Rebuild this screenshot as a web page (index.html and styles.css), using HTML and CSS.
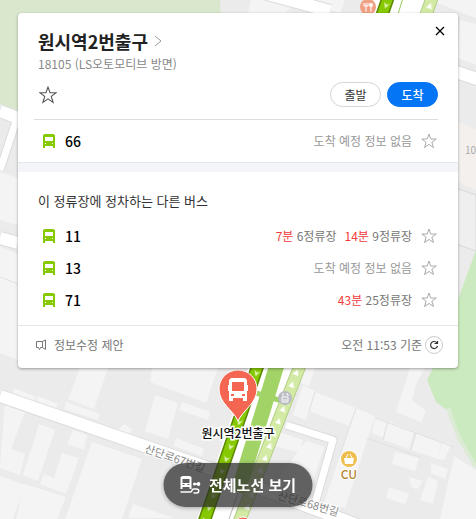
FILE: index.html
```html
<!DOCTYPE html>
<html lang="ko">

<head>
<meta charset="utf-8">
<meta name="viewport" content="width=device-width, initial-scale=1">

<title>원시역2번출구</title>

<link rel="stylesheet" href="styles.css">
</head>

<body>

	<!-- map -->
	<svg class="map" viewBox="0 0 476 519" preserveAspectRatio="xMidYMin slice" aria-hidden="true">
		<defs>
			<pattern id="down" width="13" height="13" patternUnits="userSpaceOnUse" patternTransform="translate(388 0) rotate(19.4)">
				<path d="M-3 3L0 5L3 3L0 9ZM10 3L13 5L16 3L13 9Z" fill="#e3f5bd"/>
			</pattern>
			<pattern id="up" width="13" height="13" patternUnits="userSpaceOnUse" patternTransform="translate(432 0) rotate(20)">
				<path d="M-3 9L0 3L3 9ZM10 9L13 3L16 9Z" fill="#fff"/>
			</pattern>
			<symbol id="star" viewBox="0 0 16 16">
				<path d="M8 1L9.800 6H15.200L10.900 9.200L12.500 14.600L8 11.400L3.500 14.600L5.100 9.200L.8 6H6.200Z" fill="none" stroke="currentColor"/>
			</symbol>
			<symbol id="bus" viewBox="0 0 12 14">
				<path fill-rule="evenodd" fill="currentColor" d="M2 0H10L12 1V14H10V12H2V14H0V1ZM2 3V7H10V3ZM2 9V10H3V9ZM9 9V10H10V9Z"/>
			</symbol>
		</defs>

		<rect width="476" height="519" fill="#ebebeb"/>

		<!-- blocks and buildings -->
		<g fill="#f4f4f4">
			<path d="M0 172L18 178V225L0 220ZM0 247L18 254V360L0 353Z"/>
			<path d="M251 0H300L285 13H248ZM308 0H345L340 13L310 4ZM460 20L476 24V65L458 58ZM430 0H476V18Z"/>
			<path d="M80 368H108L94 409L68 399ZM152 368H218L206 403L150 382Z"/>
			<path d="M155 395L178 403L168 439L145 431ZM182 402L210 412L208 420L179 410ZM176 438L204 449L202 456L174 446Z"/>
			<path d="M14 388L36 397L34 402L12 394ZM38 396L58 404L56 408L36 401ZM66 402L100 414L98 420L64 409ZM117 431L124 424L132 429L130 434Z"/>
			<path d="M5 401L26 409L11 449L25 454L20 475L0 468ZM39 424L55 430L38 481L23 475ZM73 430L87 435L84 450L67 444Z"/>
			<path d="M62 453L79 458L66 494L40 484L44 474L54 478ZM0 476L25 485L13 519H0ZM24 484L66 497L57 519H16ZM92 442L142 459L122 519H65ZM133 504L174 518H128Z"/>
			<path d="M303 385L315 391L306 420L293 415ZM315 392L356 408L349 426L309 411ZM356 408L375 416L345 508L324 503Z"/>
			<path d="M410 368H425L417 382L412 400L426 411L421 422L396 412ZM303 368H315L309 386L301 383Z"/>
			<path d="M375 418L387 421L383 438L372 433ZM388 421L414 432L409 449L384 440ZM416 433L441 442L438 459L411 450ZM442 442L451 445L444 460L438 459ZM395 452L419 458L415 471L392 464Z"/>
			<path d="M431 463L448 469L445 479L431 473ZM428 477L438 481L433 504L420 500ZM409 477L423 481L418 489L411 487ZM389 487L409 494L405 504L386 498ZM454 456L476 470V519H440Z"/>
			<path d="M279 432L303 440L300 453L272 445ZM306 441L324 447L307 502L270 490Z"/>
		</g>
		<g fill="none" stroke="#e1e1e1">
			<path d="M0 277L18 284M375 418L454 447M366 438L420 457M315 392L309 411M356 408L340 455M388 421L383 440M416 433L411 450"/>
		</g>

		<!-- parks -->
		<path d="M0 0H220L221 18H18V110L0 104Z" fill="#d9e8cc"/>
		<path d="M476 250L433 368L427 380L436 402L448 411L459 438L476 467Z" fill="#cceabf"/>
		<path d="M448 408L459 438L476 467" fill="none" stroke="#dcebd4" stroke-width="4"/>
		<path d="M456 121L476 129V190L456 181Z" fill="#f4f0ed"/>
		<path d="M456 188L476 195V251L456 244" fill="#efefef" stroke="#d8d8d8"/>

		<!-- side roads -->
		<g fill="none" stroke-linejoin="round">
			<g stroke="#dcdcdc" stroke-width="14">
				<path d="M0 111L18 118M0 238L18 243M0 396L214 470M240 481L360 526M456 72L480 80M260 -8L330 11"/>
				<path d="M286 425L333 440L314 507M18 115L0 170" stroke-width="9"/>
			</g>
			<g stroke="#fff" stroke-width="12">
				<path d="M0 111L18 118M0 238L18 243M0 396L214 470M240 481L360 526M456 72L480 80M260 -8L330 11"/>
				<path d="M286 425L333 440L314 507M18 115L0 170" stroke-width="7"/>
			</g>
		</g>

		<!-- main road with the bus lanes -->
		<path d="M374 -2H438L238 522H196Z" fill="#fff"/>
		<path d="M411 -2L276 368L238 492" fill="none" stroke="#a2d366" stroke-width="15"/>
		<path d="M374 -2H425L424 18H370Z" fill="#fff"/>
		<path d="M403 -2L398 14" stroke="#98c959" stroke-width="1"/>
		<path d="M238 493L228 522" stroke="#bbb"/>
		<path d="M256 393L282 401" stroke="#a2d366" stroke-width="5"/>
		<path d="M432 -2L299 368L239 522" fill="none" stroke="#b3cf87" stroke-width="13"/>
		<path d="M432 -2L299 368L239 522" fill="none" stroke="#d3eaa5" stroke-width="11"/>
		<path d="M432 -2L299 368L239 522" fill="none" stroke="url(#up)" stroke-width="11"/>
		<path d="M388 -2L257 368L204 522" fill="none" stroke="#5c8700" stroke-width="13"/>
		<path d="M388 -2L257 368L204 522" fill="none" stroke="#87c900" stroke-width="10"/>
		<path d="M388 -2L257 368L204 522" fill="none" stroke="url(#down)" stroke-width="10"/>

		<!-- places -->
		<circle cx="368" cy="7" r="8" fill="#f2a083"/>
		<path d="M364 3V6H368V3M366 3V12M371 3V12" fill="none" stroke="#fff"/>
		<circle cx="371" cy="5" r="2" fill="#fff"/>
		<circle cx="285" cy="398" r="7" fill="#b8bbc1"/>
		<path d="M282 397H288V402H282ZM283 393V396M286 394H288V396M283 400H287" fill="none" stroke="#fff"/>
		<circle cx="349" cy="459" r="9" fill="#fff"/>
		<circle cx="349" cy="459" r="8" fill="#efbd4c"/>
		<path d="M344 458H354L353 464H345Z" fill="#fff"/>
		<path d="M346 458L348 454M352 458L350 454" stroke="#fff"/>
		<circle cx="243" cy="526" r="9" fill="#f26552" stroke="#fff"/>

		<g class="road_name">
			<text transform="translate(144 452) rotate(19)">산단로67번길</text>
			<text transform="translate(277 499) rotate(16)">산단로68번길</text>
		</g>
		<text class="shop" x="349" y="479">CU</text>
		<text class="lot" x="465" y="154">10</text>

		<!-- bus stop pin -->
		<path d="M238 421C233 410 219 403 219 389A19 19 0 0 1 257 389C257 403 243 410 238 421Z" fill="#f56652" stroke="#fff" stroke-width="1"/>
		<path fill="#fff" fill-rule="evenodd" d="M231 378H245L247 380V385H248V391H247V401H243V398H233V401H229V391H228V385H229V380ZM232 382V391H244V382ZM231 394V396H234V394ZM242 394V396H245V394Z"/>
		<text class="stop_name" x="238" y="438">원시역2번출구</text>
	</svg>

	<main class="card">
		<header class="head">
			<div class="title_row">
				<h1><a href="#">원시역2번출구
					<svg class="arrow" viewBox="0 0 8 12" aria-hidden="true"><path d="M1 1L7 6L1 11" fill="none" stroke="#999"/></svg>
				</a></h1>
				<button type="button" class="close" aria-label="닫기">
					<svg viewBox="0 0 10 10" aria-hidden="true"><path d="M1 1L9 9M9 1L1 9" stroke="#000" stroke-width="1.300"/></svg>
				</button>
			</div>
			<p class="stop_info">18105 (LS오토모티브 방면)</p>
			<div class="actions">
				<button type="button" class="star star_main" aria-label="즐겨찾기"><svg><use href="#star"/></svg></button>
				<button type="button" class="pill">출발</button>
				<button type="button" class="pill pill_blue">도착</button>
			</div>
		</header>

		<ul class="buses first">
			<li>
				<svg class="bus"><use href="#bus"/></svg>
				<a href="#" class="number">66</a>
				<span class="none">도착 예정 정보 없음</span>
				<button type="button" class="star" aria-label="66 즐겨찾기"><svg><use href="#star"/></svg></button>
			</li>
		</ul>

		<section class="others">
			<h2>이 정류장에 정차하는 다른 버스</h2>
			<ul class="buses">
				<li>
					<svg class="bus"><use href="#bus"/></svg>
					<a href="#" class="number">11</a>
					<span class="arrive"><em>7분</em> 6정류장</span>
					<span class="arrive"><em>14분</em> 9정류장</span>
					<button type="button" class="star" aria-label="11 즐겨찾기"><svg><use href="#star"/></svg></button>
				</li>
				<li>
					<svg class="bus"><use href="#bus"/></svg>
					<a href="#" class="number">13</a>
					<span class="none">도착 예정 정보 없음</span>
					<button type="button" class="star" aria-label="13 즐겨찾기"><svg><use href="#star"/></svg></button>
				</li>
				<li>
					<svg class="bus"><use href="#bus"/></svg>
					<a href="#" class="number">71</a>
					<span class="arrive"><em>43분</em> 25정류장</span>
					<button type="button" class="star" aria-label="71 즐겨찾기"><svg><use href="#star"/></svg></button>
				</li>
				<li class="more">
					<button type="button" class="star" aria-label="즐겨찾기"><svg><use href="#star"/></svg></button>
				</li>
			</ul>
		</section>

		<footer class="foot">
			<a href="#" class="suggest">
				<svg viewBox="0 0 12 12" aria-hidden="true"><path d="M1.500 2.500H7.500V8.500H5.500L4.500 10.500L3.500 8.500H1.500ZM7.500 2.500L10.500 1V10.500L7.500 8.500" fill="none" stroke="#777"/></svg>
				정보수정 제안
			</a>
			<span class="time">오전 11:53 기준</span>
			<button type="button" class="refresh" aria-label="새로고침">
				<svg viewBox="0 0 10 10" aria-hidden="true"><path d="M8 3A3.500 3.500 0 1 0 8.500 6M8.500 1V3.500H5.500" fill="none" stroke="#333" stroke-width="1.200"/></svg>
			</button>
		</footer>
	</main>

	<button type="button" class="all_routes">
		<svg viewBox="0 0 21 18" aria-hidden="true">
			<path fill="#fff" fill-rule="evenodd" d="M2 0H11V1H12V13H10V11H3V13H1V1H2ZM3 3V7H10V3ZM3 8V9H5V8ZM8 8V9H10V8Z"/>
			<path d="M14 8H19M1 16H11C13 16 12 13 14 13H17C20 13 20 17 17 17H14" fill="none" stroke="#fff" stroke-width="1.500"/>
			<circle cx="19" cy="8" r="2" fill="#fff"/>
			<circle cx="15" cy="8" r="1.500" fill="#fff"/>
		</svg>
		전체노선 보기
	</button>

</body>
</html>
```
FILE: styles.css
```css
* {
	box-sizing: border-box;
}

body {
	margin: 0;
	min-height: 100vh;
	padding: 13px 18px;
	overflow: hidden;
	background-color: #ebebeb;
	font-family: "Noto Sans CJK KR", "Noto Sans", sans-serif;
	font-size: 12px;
	line-height: 20px;
	color: #333;
}

h1, h2, p, ul {
	margin: 0;
	padding: 0;
}

a {
	color: inherit;
	text-decoration: none;
}

button {
	padding: 0;
	border: 0;
	background: none;
	font-family: inherit;
	font-size: 12px;
	color: #333;
}

svg {
	display: block;
}

/* map */

.map {
	position: absolute;
	top: 0;
	left: 0;
	width: 100%;
	height: 100%;
}

.road_name {
	font-size: 11px;
	fill: #888;
	stroke: #fff;
	stroke-width: 2px;
	paint-order: stroke;
}

.shop {
	font-size: 12px;
	font-weight: 500;
	text-anchor: middle;
	fill: #b5822c;
	stroke: #fff;
	stroke-width: 2px;
	paint-order: stroke;
}

.lot {
	font-size: 10px;
	fill: #aaa;
}

.stop_name {
	font-size: 12px;
	font-weight: 500;
	text-anchor: middle;
	fill: #111;
	stroke: #fff;
	stroke-width: 3px;
	paint-order: stroke;
}

/* card */

.card {
	position: relative;
	background-color: #fff;
	border-radius: 4px;
	box-shadow: 0 1px 3px rgba(0, 0, 0, 0.35);
}

.head {
	margin: 0 20px 0 16px;
	padding: 15px 0 12px 4px;
	border-bottom: 1px solid #ddd;
}

.title_row {
	display: flex;
	justify-content: space-between;
}

h1 {
	font-size: 18px;
	font-weight: 700;
	line-height: 26px;
	color: #222;
}

h1 a {
	display: flex;
	align-items: center;
	gap: 6px;
}

.arrow {
	width: 8px;
	height: 12px;
}

.close {
	width: 20px;
	height: 20px;
	margin: -7px -12px 0 0;
}

.close svg {
	width: 10px;
	height: 10px;
	margin: 0 auto;
}

.stop_info {
	color: #888;
}

.actions {
	display: flex;
	align-items: center;
	gap: 6px;
	margin-top: 8px;
}

.star {
	color: #aaa;
}

.star svg {
	width: 16px;
	height: 16px;
}

.star_main {
	margin: 0 auto 0 1px;
	color: #555;
}

.star_main svg {
	width: 18px;
	height: 18px;
}

.pill {
	width: 51px;
	height: 25px;
	border: 1px solid #d5d5d5;
	border-radius: 13px;
	line-height: 22px;
}

.pill_blue {
	border-color: #0475f4;
	background-color: #0475f4;
	font-weight: 500;
	color: #fff;
}

.buses {
	list-style: none;
}

.buses li {
	display: flex;
	align-items: center;
	height: 32px;
	padding: 0 21px 0 25px;
}

.first li {
	height: 43px;
	padding-bottom: 1px;
}

.bus {
	width: 12px;
	height: 14px;
	color: #87c900;
}

.number {
	margin: 0 auto 0 10px;
	font-size: 14px;
	font-weight: 500;
	color: #000;
}

.none {
	color: #999;
}

.arrive {
	margin-left: 8px;
	color: #777;
}

.arrive em {
	font-style: normal;
	color: #f33b3b;
}

.buses .star {
	margin-left: 9px;
}

.others {
	height: 162px;
	overflow: hidden;
	border-top: 9px solid #f3f5f9;
	padding-top: 19px;
	box-shadow: 0 -1px #e1e7f0;
}

.buses .more {
	justify-content: flex-end;
}

h2 {
	margin-bottom: 9px;
	padding: 0 20px;
	font-size: 13px;
	font-weight: 400;
	line-height: 20px;
}

.foot {
	display: flex;
	align-items: center;
	height: 43px;
	padding: 0 15px 4px 17px;
	border-top: 1px solid #e5e5e5;
	color: #777;
}

.suggest {
	display: flex;
	align-items: center;
	gap: 7px;
	margin-right: auto;
}

.suggest svg {
	width: 12px;
	height: 12px;
}

.refresh {
	width: 18px;
	height: 18px;
	margin-left: 3px;
	border: 1px solid #ccc;
	border-radius: 50%;
}

.refresh svg {
	width: 10px;
	height: 10px;
	margin: 0 auto;
}

.all_routes {
	position: fixed;
	bottom: 12px;
	left: 50%;
	display: flex;
	align-items: center;
	justify-content: center;
	gap: 8px;
	width: 149px;
	height: 44px;
	transform: translateX(-50%);
	border-radius: 22px;
	background-color: rgba(40, 40, 40, 0.72);
	box-shadow: 0 1px 4px rgba(0, 0, 0, 0.3);
	font-size: 15px;
	font-weight: 700;
	line-height: 20px;
	color: #fff;
}

.all_routes svg {
	width: 21px;
	height: 18px;
}
```
